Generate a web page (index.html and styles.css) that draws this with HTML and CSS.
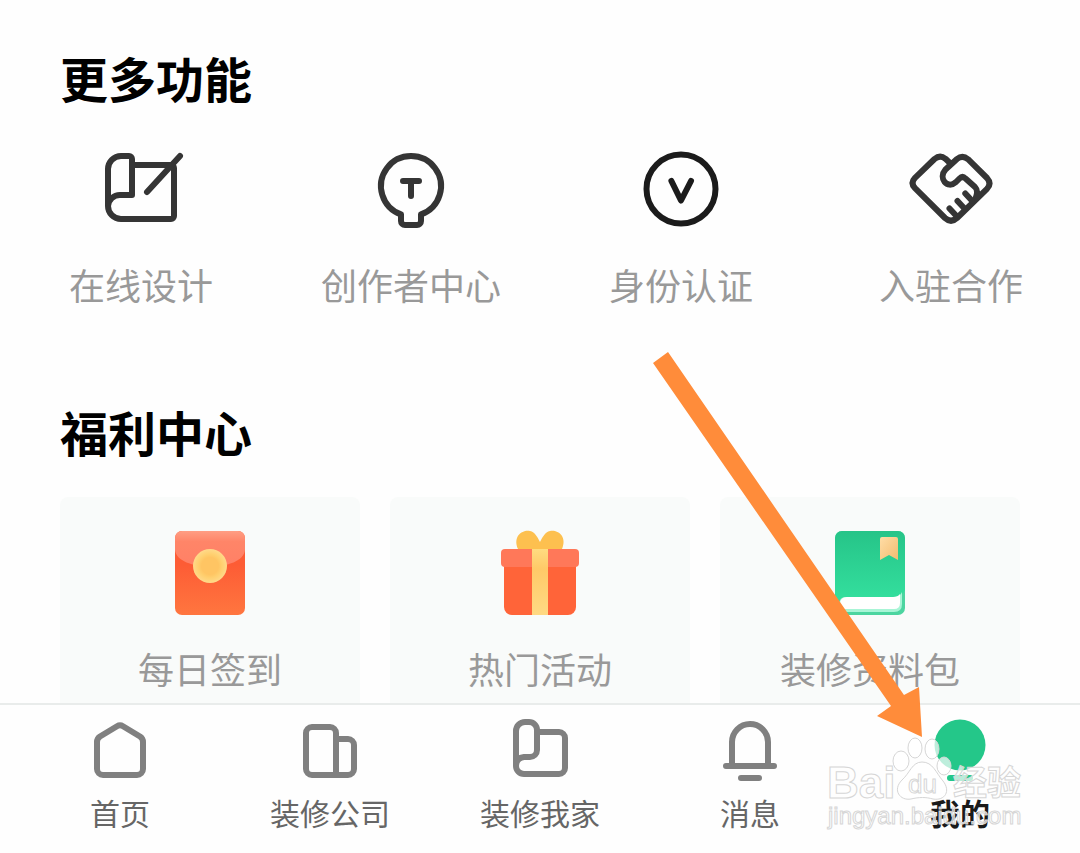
FILE: index.html
```html
<!DOCTYPE html>
<html lang="zh-CN">
<head>
    <meta charset="UTF-8">
    <meta name="viewport" content="width=device-width, initial-scale=1.0">
    <title>我的</title>
    <link rel="stylesheet" href="styles.css">
</head>
<body>

    <main class="content">
        <!-- More Features -->
        <section class="section">
            <h2 class="title">更多功能</h2>
            <div class="features">
                <a class="feature" href="#design">
                    <svg class="icon line" viewBox="0 0 90 90" aria-hidden="true">
                        <path d="M12 63V26a13 13 0 0 1 13-13h8a3 3 0 0 1 3 3v36H24a12 12 0 0 0-12 11a13 13 0 0 0 13 13h50a3 3 0 0 0 3-3V25a3 3 0 0 0-3-3H36"/>
                        <path d="M84 13L51 49"/>
                    </svg>
                    <span>在线设计</span>
                </a>
                <a class="feature" href="#creator">
                    <svg class="icon line" viewBox="0 0 90 90" aria-hidden="true">
                        <path d="M35 71.300A30 30 0 1 1 55 71.300V78a4 4 0 0 1-4 4H39a4 4 0 0 1-4-4z"/>
                        <path d="M37 38h16M45 38v15"/>
                    </svg>
                    <span>创作者中心</span>
                </a>
                <a class="feature" href="#identity">
                    <svg class="icon line dark" viewBox="0 0 90 90" aria-hidden="true">
                        <circle cx="45" cy="46" r="34.500"/>
                        <path d="M35.400 38L45 57.500L55 38"/>
                    </svg>
                    <span>身份认证</span>
                </a>
                <a class="feature" href="#join">
                    <svg class="icon line" viewBox="0 -1 90 90" aria-hidden="true">
                        <path d="M45 20L39.500 14.800Q34 10.500 28.500 15L9 33.800Q4 39 9 44.200L39 74Q45 79.500 51 74L81 44.800Q86 39.500 81 34L62 15.200Q56.500 10.500 51 15L39.500 25.500C32 34 41 46 50 38L53.500 34.500Q56.500 31.500 59.500 34.500L69 43Q72.500 46.500 70 53"/>
                        <path d="M43.500 64.500l6.500 7M51.500 57l6.500 7M59.300 49.500l6.500 7"/>
                    </svg>
                    <span>入驻合作</span>
                </a>
            </div>
        </section>

        <!-- Benefits -->
        <section class="section">
            <h2 class="title">福利中心</h2>
            <div class="cards">
                <a class="card" href="#checkin">
                    <svg class="icon" viewBox="0 0 90 90" aria-hidden="true">
                        <defs>
                            <linearGradient id="flap" x1="0" y1="0" x2="0" y2="1">
                                <stop offset="0" stop-color="#ff9e84"/>
                                <stop offset="0.3" stop-color="#ff8568"/>
                                <stop offset="1" stop-color="#ff8066"/>
                            </linearGradient>
                            <linearGradient id="packet" x1="0" y1="0" x2="0" y2="1">
                                <stop offset="0.4" stop-color="#fd5c35"/>
                                <stop offset="1" stop-color="#ff763f"/>
                            </linearGradient>
                            <radialGradient id="coin">
                                <stop offset="0.5" stop-color="#ffc563"/>
                                <stop offset="0.7" stop-color="#ffd070"/>
                                <stop offset="1" stop-color="#ffd98a"/>
                            </radialGradient>
                        </defs>
                        <rect x="10" y="4" width="70" height="84" rx="7" fill="url(#packet)"/>
                        <path d="M10 11a7 7 0 0 1 7-7h56a7 7 0 0 1 7 7v12c-2 22-68 22-70 0z" fill="url(#flap)"/>
                        <circle cx="45" cy="39" r="17" fill="url(#coin)"/>
                    </svg>
                    <span>每日签到</span>
                </a>
                <a class="card" href="#activity">
                    <svg class="icon" viewBox="0 0 90 90" aria-hidden="true">
                        <defs>
                            <linearGradient id="ribbon" x1="0" y1="0" x2="0" y2="1">
                                <stop offset="0" stop-color="#ffdc80"/>
                                <stop offset="0.3" stop-color="#ffc968"/>
                                <stop offset="1" stop-color="#ffd983"/>
                            </linearGradient>
                        </defs>
                        <path d="M23 22C17 8 29 2 35 4C40 5 43 11 45 15C47 11 50 5 55 4C61 2 73 8 67 22z" fill="#fdc04f"/>
                        <path d="M9 38h72v42a8 8 0 0 1-8 8H17a8 8 0 0 1-8-8z" fill="#ff6439"/>
                        <path d="M10 22h70a4 4 0 0 1 4 4v10a4 4 0 0 1-4 4H10a4 4 0 0 1-4-4V26a4 4 0 0 1 4-4z" fill="#ff7859"/>
                        <path d="M37 22h16v66H37z" fill="url(#ribbon)"/>
                    </svg>
                    <span>热门活动</span>
                </a>
                <a class="card" href="#package">
                    <svg class="icon" viewBox="0 0 90 90" aria-hidden="true">
                        <defs>
                            <linearGradient id="book" x1="0" y1="0" x2="0" y2="1">
                                <stop offset="0" stop-color="#26c488"/>
                                <stop offset="1" stop-color="#35e2a0"/>
                            </linearGradient>
                            <linearGradient id="mark" x1="0" y1="0" x2="1" y2="1">
                                <stop offset="0" stop-color="#ffdda6"/>
                                <stop offset="1" stop-color="#f3bc70"/>
                            </linearGradient>
                        </defs>
                        <rect x="10" y="4" width="70" height="84" rx="7" fill="#4cd5a0"/>
                        <path d="M10 11a7 7 0 0 1 7-7h56a7 7 0 0 1 7 7v52q-3 7-9 7H20q-6 0-6 6l-4 4z" fill="url(#book)"/>
                        <path d="M14 78q0-8 7-8h48q6 0 8-5v12q0 8-8 8H20q-6 0-6-7z" fill="#a8f5d6"/>
                        <path d="M15 77q0-7 7-7h46q5 0 7-3v9q0 6-6 6H20q-5 0-5-5z" fill="#ffffff"/>
                        <path d="M55 12a2 2 0 0 1 2-2h14a2 2 0 0 1 2 2v21l-9-5l-9 5z" fill="url(#mark)"/>
                    </svg>
                    <span>装修资料包</span>
                </a>
            </div>
        </section>
    </main>

    <!-- Bottom Tab Bar -->
    <nav class="tabbar">
        <a class="tab" href="#home">
            <svg class="tab-icon line" viewBox="0 0 66 66" aria-hidden="true">
                <path d="M30 9.200Q33 7.400 36 9.200L53 19.500Q56 21.500 56 25V52a6 6 0 0 1-6 6H16a6 6 0 0 1-6-6V25Q10 21.500 13 19.500z"/>
            </svg>
            <span>首页</span>
        </a>
        <a class="tab" href="#company">
            <svg class="tab-icon line" viewBox="0 0 66 66" aria-hidden="true">
                <path d="M39 58V16a6 6 0 0 0-6-6H15a6 6 0 0 0-6 6v36a6 6 0 0 0 6 6h36a6 6 0 0 0 6-6V28a6 6 0 0 0-6-6H39"/>
            </svg>
            <span>装修公司</span>
        </a>
        <a class="tab" href="#my-home">
            <svg class="tab-icon line" viewBox="0 0 66 66" aria-hidden="true">
                <path d="M9 49V14a9 9 0 0 1 9-9h4a8 8 0 0 1 8 8v20a7 7 0 0 1-7 7h-6q-8 1-8 9a8 8 0 0 0 8 8h35a6 6 0 0 0 6-6V21a6 6 0 0 0-6-6H30"/>
            </svg>
            <span>装修我家</span>
        </a>
        <a class="tab" href="#message">
            <svg class="tab-icon line" viewBox="0 0 66 66" aria-hidden="true">
                <path d="M15 49V25a18 18 0 0 1 36 0v24M9 49h48M24 61h18"/>
            </svg>
            <span>消息</span>
        </a>
        <a class="tab active" href="#mine">
            <svg class="tab-icon line" viewBox="0 0 66 66" aria-hidden="true">
                <circle class="avatar" cx="33" cy="28" r="25.500"/>
                <path d="M23 61h20"/>
            </svg>
            <span>我的</span>
        </a>
    </nav>

    <!-- Arrow pointing at the last tab -->
    <svg class="arrow" viewBox="0 0 280 390" aria-hidden="true">
        <path d="M3 14L18 3L254 346L269 338L272 388L227 367L241 357z"/>
    </svg>

    <!-- Watermark -->
    <svg class="watermark" viewBox="0 0 210 104" aria-hidden="true">
        <text class="mark-brand" x="6" y="65">Bai</text>
        <ellipse cx="80" cy="28" rx="8" ry="10"/>
        <ellipse cx="94" cy="15" rx="7" ry="10"/>
        <ellipse cx="111" cy="16" rx="7" ry="10"/>
        <ellipse cx="123" cy="33" rx="7" ry="9"/>
        <path d="M101 29C91 29 89 40 81 47C71 57 79 68 90 66C98 64 105 64 112 66C124 68 130 58 122 48C115 40 112 29 101 29z"/>
        <text class="mark-du" x="87" y="60">du</text>
        <text class="mark-cn" x="132" y="62">经验</text>
        <text class="mark-url" x="7" y="91">jingyan.baidu.com</text>
    </svg>

</body>
</html>
```

FILE: styles.css
```css
* {
    box-sizing: border-box;
}

body {
    position: relative;
    display: flex;
    flex-direction: column;
    height: 100vh;
    margin: 0;
    overflow: hidden;
    background-color: #fefefe;
    font-family: "Noto Sans CJK SC", sans-serif;
}

a {
    color: inherit;
    text-decoration: none;
}

/* Sections */
.content {
    flex: 1;
    min-height: 0;
    overflow: hidden;
    padding-top: 41px;
}

.section {
    margin-bottom: 84px;
}

.title {
    margin: 0 60px 30px;
    font-size: 48px;
    line-height: 72px;
    font-weight: 700;
    color: #000;
}

.features {
    display: flex;
    justify-content: space-between;
    padding: 0 39px 0 51px;
}

.feature,
.card {
    display: flex;
    flex-direction: column;
    align-items: center;
    gap: 24px;
    font-size: 36px;
    line-height: 54px;
    color: #999;
    white-space: nowrap;
}

.feature {
    width: 180px;
}

.cards {
    display: grid;
    grid-template-columns: repeat(3, 1fr);
    gap: 30px;
    padding: 0 60px;
}

.card {
    padding: 30px 0;
    border-radius: 8px;
    background-color: #f9fbfa;
}

/* Icons */
.icon {
    width: 90px;
    height: 90px;
}

.line {
    fill: none;
    stroke: #353535;
    stroke-width: 6;
    stroke-linecap: round;
    stroke-linejoin: round;
}

.dark {
    stroke: #1b1b1b;
}

/* Tab Bar */
.tabbar {
    display: grid;
    grid-template-columns: repeat(5, 1fr);
    flex: none;
    padding: 12px 15px 24px;
    border-top: 2px solid #e9eceb;
    background-color: #fefefe;
}

.tab {
    display: flex;
    flex-direction: column;
    align-items: center;
    gap: 6px;
    font-size: 30px;
    line-height: 40px;
    color: #666;
}

.tab-icon {
    width: 66px;
    height: 66px;
    margin-bottom: 3px;
    stroke: #808080;
}

.tab span {
    margin-bottom: -3px;
}

.tab.active {
    font-weight: 700;
    color: #1a1a1a;
}

.tab.active .tab-icon {
    stroke: #24c789;
}

.avatar {
    fill: #24c789;
    stroke: none;
}

/* Overlays */
.arrow {
    position: absolute;
    right: 150px;
    bottom: 114px;
    width: 280px;
    height: 390px;
    fill: #ff8c3a;
}

.watermark {
    position: absolute;
    right: 49px;
    bottom: 16px;
    width: 210px;
    height: 104px;
    fill: #fff;
    fill-opacity: 0.7;
    stroke: #d6d6d6;
    stroke-width: 1;
    font-family: "Liberation Sans", "Noto Sans CJK SC", sans-serif;
}

.mark-brand {
    font-size: 44px;
    font-weight: 700;
}

.mark-du {
    font-size: 26px;
}

.mark-cn {
    font-size: 34px;
    font-weight: 700;
}

.mark-url {
    font-size: 24px;
}
```
